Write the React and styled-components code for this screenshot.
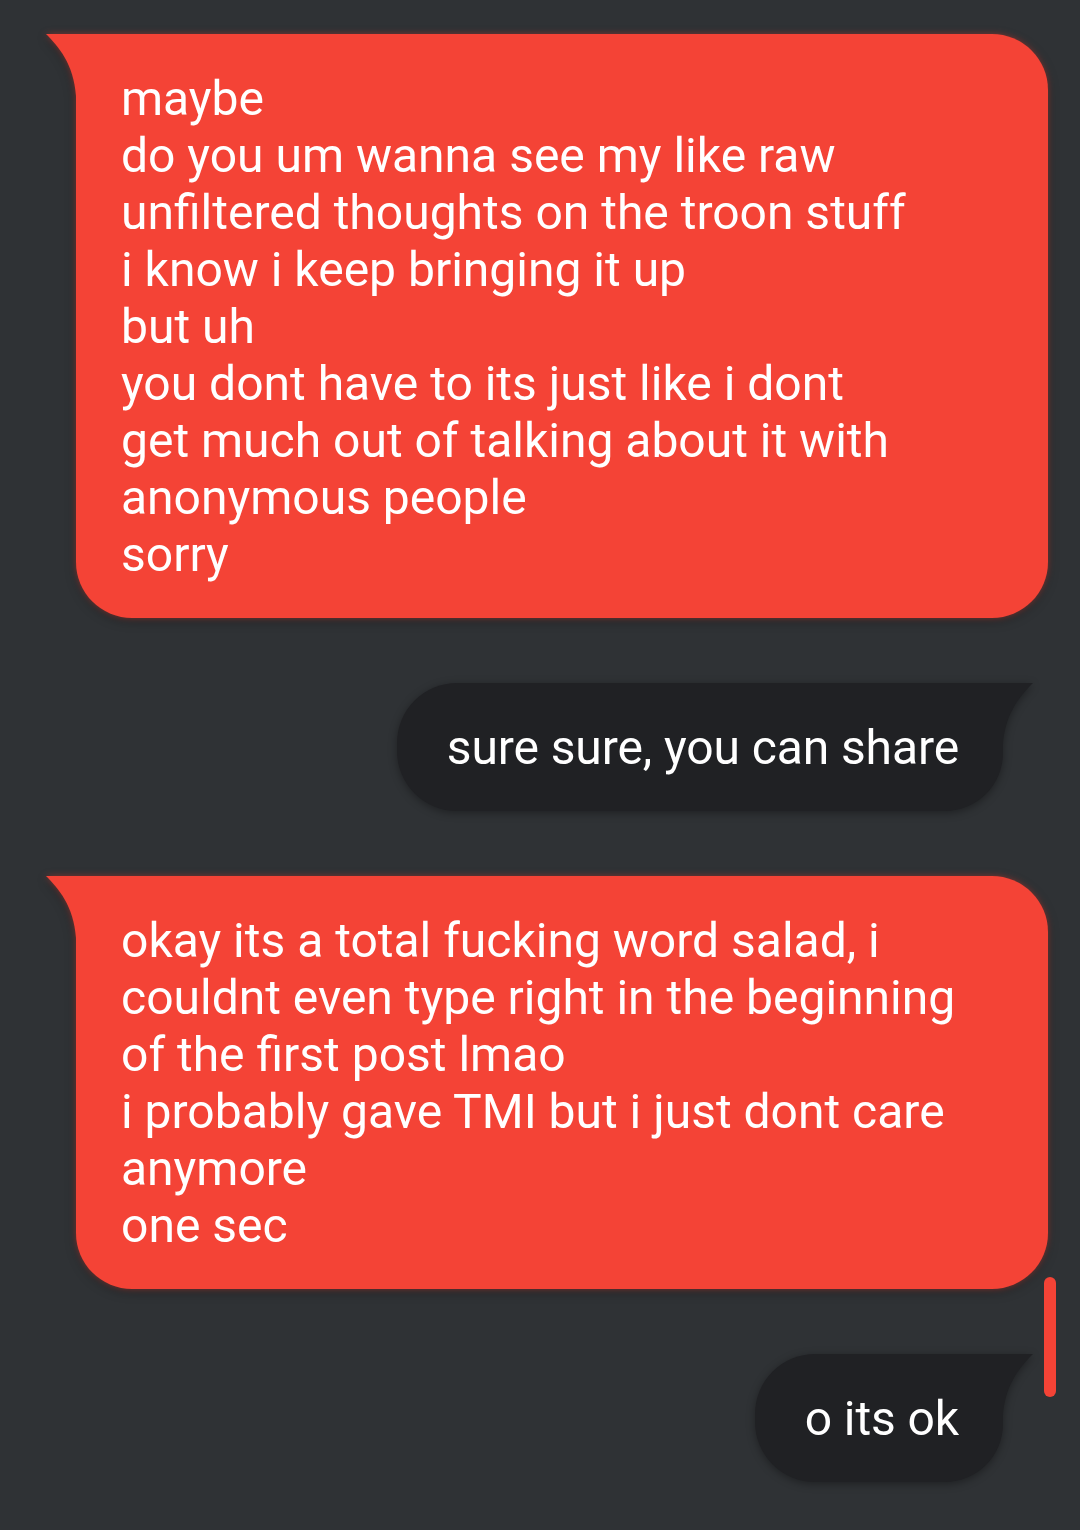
import React from "react";
import styled, { createGlobalStyle, css } from "styled-components";

const Global = createGlobalStyle`
  html, body {
    margin: 0;
    padding: 0;
    background: #2f3235;
  }
  * { box-sizing: border-box; }
`;

const Screen = styled.div`
  position: relative;
  width: 1080px;
  min-height: 1530px;
  background: #2f3235;
  padding-top: 34px;
  display: flex;
  flex-direction: column;
  gap: 65px;
  font-family: Roboto, "Noto Sans", sans-serif;
  overflow: hidden;
`;

const Row = styled.div`
  display: flex;
  justify-content: ${(p) => (p.$mine ? "flex-end" : "stretch")};
  padding: ${(p) => (p.$mine ? "0 77px 0 0" : "0 32px 0 76px")};
`;

const Bubble = styled.div`
  position: relative;
  color: #ffffff;
  font-size: 48px;
  line-height: 57px;
  padding-top: 36px;
  padding-bottom: 35px;
  ${(p) =>
    p.$mine
      ? css`
          background: #202124;
          border-radius: 60px 0 58px 60px;
          padding-left: 50px;
          padding-right: 44px;
          letter-spacing: -0.1px;
          filter: drop-shadow(0 2px 4px rgba(0, 0, 0, 0.35));
        `
      : css`
          flex: 1;
          background: #f44336;
          border-radius: 0 56px 56px 56px;
          padding-left: 45px;
          padding-right: 45px;
          filter: drop-shadow(0 0 3px rgba(244, 67, 54, 0.45))
            drop-shadow(0 3px 5px rgba(0, 0, 0, 0.3));
        `}
`;

const Tail = styled.svg`
  position: absolute;
  top: 0;
  width: 32px;
  height: 72px;
  ${(p) =>
    p.$mine
      ? css`
          right: -30px;
          transform: scaleX(-1);
        `
      : css`
          left: -30px;
        `}
`;

const Line = styled.div`
  white-space: nowrap;
`;

const ScrollThumb = styled.div`
  position: absolute;
  top: 1277px;
  right: 24px;
  width: 12px;
  height: 120px;
  border-radius: 6px;
  background: #f44336;
`;

const messages = [
  {
    mine: false,
    lines: [
      "maybe",
      "do you um wanna see my like raw",
      "unfiltered thoughts on the troon stuff",
      "i know i keep bringing it up",
      "but uh",
      "you dont have to its just like i dont",
      "get much out of talking about it with",
      "anonymous people",
      "sorry",
    ],
  },
  { mine: true, lines: ["sure sure, you can share"] },
  {
    mine: false,
    lines: [
      "okay its a total fucking word salad, i",
      "couldnt even type right in the beginning",
      "of the first post lmao",
      "i probably gave TMI but i just dont care",
      "anymore",
      "one sec",
    ],
  },
  { mine: true, lines: ["o its ok"] },
];

function Message({ mine, lines }) {
  return (
    <Row $mine={mine}>
      <Bubble $mine={mine}>
        <Tail $mine={mine} viewBox="0 0 32 72" aria-hidden="true">
          <path
            d="M0 0 H32 V72 H30 V62 C28 30 12 12 0 0 Z"
            fill={mine ? "#202124" : "#f44336"}
          />
        </Tail>
        {lines.map((l, i) => (
          <Line key={i}>{l}</Line>
        ))}
      </Bubble>
    </Row>
  );
}

export default function App() {
  return (
    <>
      <Global />
      <Screen>
        {messages.map((m, i) => (
          <Message key={i} mine={m.mine} lines={m.lines} />
        ))}
        <ScrollThumb />
      </Screen>
    </>
  );
}
